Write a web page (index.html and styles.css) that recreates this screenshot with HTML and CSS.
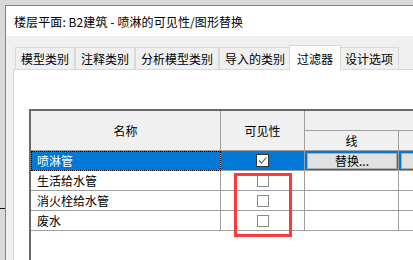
FILE: index.html
```html
<!DOCTYPE html>
<html lang="zh-CN">
<head>
<meta charset="utf-8">
<title>可见性/图形替换</title>
<link rel="stylesheet" href="styles.css">
</head>
<body>
<div class="screen">
  <div class="window">
    <div class="titlebar">楼层平面: B2建筑 - 喷淋的可见性/图形替换</div>
    <div class="content">
      <div class="tabs">
        <div class="tab">模型类别</div>
        <div class="tab">注释类别</div>
        <div class="tab">分析模型类别</div>
        <div class="tab">导入的类别</div>
        <div class="tab active">过滤器</div>
        <div class="tab">设计选项</div>
      </div>
      <div class="panel">
        <div class="grid">
          <div class="cell head h-name">名称</div>
          <div class="cell head h-vis">可见性</div>
          <div class="cell head h-group"></div>
          <div class="cell head">线</div>
          <div class="cell head"></div>

          <div class="cell sel name focus">喷淋管</div>
          <div class="cell sel center"><span class="cb checked"><svg viewBox="0 0 11 11" width="11" height="11"><path d="M2 5.5 L4.5 8 L9.5 2.5" fill="none" stroke="#555" stroke-width="1.1"/></svg></span></div>
          <div class="cell sel"><span class="btn">替换...</span></div>
          <div class="cell sel"><span class="btn"></span></div>

          <div class="cell name">生活给水管</div>
          <div class="cell center"><span class="cb"></span></div>
          <div class="cell"></div>
          <div class="cell"></div>

          <div class="cell name">消火栓给水管</div>
          <div class="cell center"><span class="cb"></span></div>
          <div class="cell"></div>
          <div class="cell"></div>

          <div class="cell name">废水</div>
          <div class="cell center"><span class="cb"></span></div>
          <div class="cell"></div>
          <div class="cell"></div>
        </div>
      </div>
    </div>
  </div>
</div>
<div class="mark"></div>
<div class="highlight"></div>
</body>
</html>
```

FILE: styles.css
```css
html, body {
  margin: 0;
  padding: 0;
}
body {
  width: 413px;
  height: 260px;
  overflow: hidden;
  position: relative;
  background: #d9d9d9;
  font-family: "Noto Sans CJK SC", "Noto Sans", sans-serif;
  font-size: 12px;
  color: #000;
}
.screen {
  box-sizing: border-box;
  height: 260px;
  padding: 5px 0 0 5px;
}
.window {
  box-sizing: border-box;
  height: 100%;
  border-left: 1px solid #8f6fb5;
  border-top: 1px solid #8f6fb5;
  background: #f0f0f0;
  display: flex;
  flex-direction: column;
}
.titlebar {
  height: 30px;
  flex: none;
  background: #fff;
  display: flex;
  align-items: center;
  padding-left: 8px;
  white-space: nowrap;
  letter-spacing: 0.1px;
}
.content {
  flex: 1;
  display: flex;
  flex-direction: column;
  padding: 9px 0 0 7px;
  min-height: 0;
}
.tabs {
  display: flex;
  align-items: flex-end;
  height: 24px;
  flex: none;
  margin-left: 2px;
  position: relative;
  z-index: 1;
}
.tab {
  box-sizing: border-box;
  height: 22px;
  padding: 0 5px;
  border: 1px solid #d9d9d9;
  border-bottom: none;
  background: #f0f0f0;
  display: flex;
  align-items: center;
  white-space: nowrap;
}
.tab.active {
  height: 25px;
  padding: 0 7px;
  margin: 0 -2px -1px;
  background: #fff;
  position: relative;
  z-index: 2;
}
.panel {
  flex: 1;
  background: #fff;
  border-top: 1px solid #d9d9d9;
  border-left: 1px solid #d9d9d9;
  padding: 39px 0 0 15px;
  display: flex;
  flex-direction: column;
  min-height: 0;
}
.grid {
  flex: 1;
  display: grid;
  grid-template-columns: 190px 84px 94px 120px;
  grid-template-rows: 20px 20px;
  grid-auto-rows: 20px;
  align-content: start;
  border-left: 2px solid #6b6b6b;
  border-top: 2px solid #6b6b6b;
  width: max-content;
}
.cell {
  box-sizing: border-box;
  border-right: 1px solid #a0a0a0;
  border-bottom: 1px solid #a0a0a0;
  display: flex;
  align-items: center;
  white-space: nowrap;
}
.head {
  background: #f0f0f0;
  justify-content: center;
}
.h-name {
  grid-row: span 2;
}
.h-vis {
  grid-row: span 2;
}
.h-group {
  grid-column: span 2;
}
.name {
  padding-left: 6px;
}
.center {
  justify-content: center;
}
.sel {
  background: #0078d7;
  color: #fff;
}
.focus {
  outline: 1px dotted #000;
  outline-offset: -1px;
}
.cb {
  box-sizing: border-box;
  width: 12px;
  height: 12px;
  border: 1px solid #8a8a8a;
  background: #fff;
  display: block;
}
.cb.checked {
  width: 13px;
  height: 13px;
  border-color: #333;
}
.cb svg {
  display: block;
}
.btn {
  box-sizing: border-box;
  width: 90px;
  height: 16px;
  margin-left: 2px;
  border: 1px solid #adadad;
  background: #e1e1e1;
  color: #000;
  display: flex;
  align-items: center;
  justify-content: center;
}
.mark {
  position: absolute;
  left: 0;
  top: 208px;
  width: 5px;
  height: 1px;
  background: #111;
}
.highlight {
  position: absolute;
  left: 234px;
  top: 173px;
  width: 58px;
  height: 64px;
  box-sizing: border-box;
  border: 3px solid #fb3b3b;
}
```
